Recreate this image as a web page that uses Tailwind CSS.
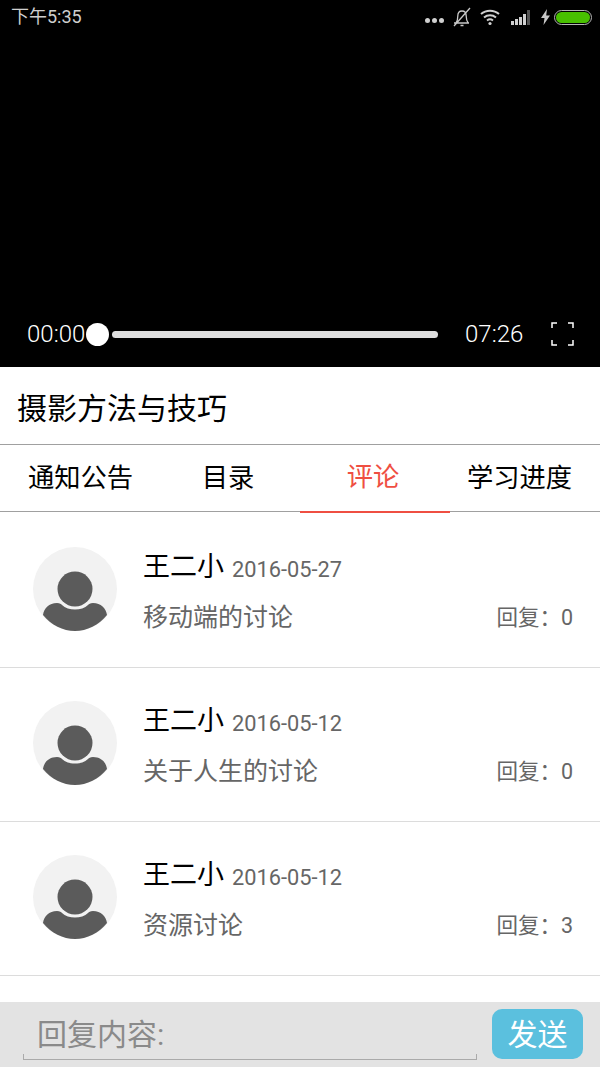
<!DOCTYPE html>
<html lang="zh-CN">
<head>
    <meta charset="UTF-8">
    <meta name="viewport" content="width=device-width, initial-scale=1.0">
    <title>摄影方法与技巧</title>
    <script src="https://cdn.jsdelivr.net/npm/@tailwindcss/browser@4"></script>
</head>
<body class="bg-white font-['Roboto','Noto_Sans_CJK_SC',sans-serif] overflow-hidden">
<div class="w-[600px] h-[1067px] flex flex-col">

    <!-- video + status bar -->
    <div class="h-[367px] bg-black flex flex-col justify-between">
        <div class="h-[34px] pl-[11px] pr-[8px] flex items-center justify-between text-[#cfcfcf]">
            <span class="text-[18px] leading-none">下午5:35</span>
            <div class="flex items-center">
                <div class="flex gap-[2px] mt-[7px] mr-[8px]">
                    <span class="w-[5px] h-[5px] rounded-full bg-[#d0d0d0]"></span>
                    <span class="w-[5px] h-[5px] rounded-full bg-[#d0d0d0]"></span>
                    <span class="w-[5px] h-[5px] rounded-full bg-[#d0d0d0]"></span>
                </div>
                <svg class="w-[20px] h-[20px] mr-[8px]" viewBox="0 0 20 20" fill="none" stroke="#c8c8c8" stroke-width="1.300"><path d="M2 16h15M4 16c1.500-2 1.800-4 1.800-7 0-3 1.800-5 4.200-5s4.200 2 4.200 5c0 3 .5 5 2 7M8.500 18.500h3M18 1 2 19"/></svg>
                <svg class="w-[20px] h-[18px] mr-[11px]" viewBox="0 0 20 18" fill="none" stroke="#d0d0d0" stroke-width="2"><path d="M1 6c5-4.500 13-4.500 18 0M4 9.500c3.500-3 8.500-3 12 0M7 12.500c1.800-1.400 4.200-1.400 6 0"/><circle cx="10" cy="15.500" r="1.600" fill="#d0d0d0" stroke="none"/></svg>
                <div class="flex items-end gap-[1px] h-[15px] mr-[11px]">
                    <span class="w-[3px] h-[4px] bg-[#d0d0d0]"></span>
                    <span class="w-[3px] h-[6px] bg-[#d0d0d0]"></span>
                    <span class="w-[3px] h-[8px] bg-[#d0d0d0]"></span>
                    <span class="w-[3px] h-[11px] bg-[#d0d0d0]"></span>
                    <span class="w-[3px] h-[15px] bg-[#555]"></span>
                </div>
                <svg class="w-[9px] h-[16px] mr-[4px]" viewBox="0 0 9 16" fill="#c8c8c8"><path d="M6 0 0 9h3.500L2.500 16 9 6.500H5.200z"/></svg>
                <div class="w-[38px] h-[15px] rounded-full border border-[#b5b5b5] p-[1px]">
                    <div class="w-full h-full rounded-full bg-[#48c000]"></div>
                </div>
            </div>
        </div>
        <div class="h-[44px] mb-[11px] pl-[27px] flex items-center text-white text-[24px] font-light">
            <span class="w-[59px] shrink-0">00:00</span>
            <span class="w-[23px] h-[23px] rounded-full bg-white shrink-0"></span>
            <span class="w-[326px] h-[7px] rounded-full bg-[#dedede] ml-[3px] shrink-0"></span>
            <span class="ml-[27px] w-[59px] shrink-0">07:26</span>
            <svg class="w-[23px] h-[24px] ml-[27px] shrink-0" viewBox="0 0 23 24" fill="none" stroke="#fff" stroke-width="1.500"><path d="M1 6V1h5M17 1h5v5M22 18v5h-5M6 23H1v-5"/></svg>
        </div>
    </div>

    <!-- title -->
    <div class="h-[78px] pl-[17px] pt-[5px] flex items-center border-b border-[#a0a0a0] text-[30px] text-black">摄影方法与技巧</div>

    <!-- tabs -->
    <div class="h-[67px] grid grid-cols-4 border-b border-[#a0a0a0] text-[26.300px] text-black">
        <div class="flex items-center justify-center pl-[11px]">通知公告</div>
        <div class="flex items-center justify-center pl-[6px]">目录</div>
        <div class="flex items-center justify-center text-[#ef4f42] h-[68px] border-b-2 border-[#ef4f42] pr-[4px]">评论</div>
        <div class="flex items-center justify-center ml-[-11px]">学习进度</div>
    </div>

    <!-- comments -->
    <div class="flex-1">
        <div class="h-[156px] pb-[1px] flex items-center border-b border-[#dcdcdc]">
            <svg class="w-[84px] h-[84px] ml-[33px] shrink-0" viewBox="0 0 84 84"><circle cx="42" cy="42" r="42" fill="#f2f2f2"/><circle cx="42" cy="42" r="17.500" fill="#5b5b5b"/><path d="M10 68C11 61 16 56 24 56C27 56 28 57 29 58C32 61 37 62.500 42 62.500S52 61 55 58C56 57 57 56 60 56C68 56 73 61 74 68C66 78 54 84 42 84S18 78 10 68Z" fill="#5b5b5b"/></svg>
            <div class="ml-[26px] mt-[5px] w-[430px]">
                <div class="flex items-center">
                    <span class="text-[27px] text-black">王二小</span>
                    <span class="ml-[8px] mt-[7px] text-[21.800px] text-[#666]">2016-05-27</span>
                </div>
                <div class="flex items-center justify-between mt-[12px]">
                    <span class="text-[25px] text-[#666]">移动端的讨论</span>
                    <span class="text-[21.500px] text-[#666]">回复：0</span>
                </div>
            </div>
        </div>
        <div class="h-[154px] pb-[3px] flex items-center border-b border-[#dcdcdc]">
            <svg class="w-[84px] h-[84px] ml-[33px] shrink-0" viewBox="0 0 84 84"><circle cx="42" cy="42" r="42" fill="#f2f2f2"/><circle cx="42" cy="42" r="17.500" fill="#5b5b5b"/><path d="M10 68C11 61 16 56 24 56C27 56 28 57 29 58C32 61 37 62.500 42 62.500S52 61 55 58C56 57 57 56 60 56C68 56 73 61 74 68C66 78 54 84 42 84S18 78 10 68Z" fill="#5b5b5b"/></svg>
            <div class="ml-[26px] mt-[5px] w-[430px]">
                <div class="flex items-center">
                    <span class="text-[27px] text-black">王二小</span>
                    <span class="ml-[8px] mt-[7px] text-[21.800px] text-[#666]">2016-05-12</span>
                </div>
                <div class="flex items-center justify-between mt-[12px]">
                    <span class="text-[25px] text-[#666]">关于人生的讨论</span>
                    <span class="text-[21.500px] text-[#666]">回复：0</span>
                </div>
            </div>
        </div>
        <div class="h-[154px] pb-[3px] flex items-center border-b border-[#dcdcdc]">
            <svg class="w-[84px] h-[84px] ml-[33px] shrink-0" viewBox="0 0 84 84"><circle cx="42" cy="42" r="42" fill="#f2f2f2"/><circle cx="42" cy="42" r="17.500" fill="#5b5b5b"/><path d="M10 68C11 61 16 56 24 56C27 56 28 57 29 58C32 61 37 62.500 42 62.500S52 61 55 58C56 57 57 56 60 56C68 56 73 61 74 68C66 78 54 84 42 84S18 78 10 68Z" fill="#5b5b5b"/></svg>
            <div class="ml-[26px] mt-[5px] w-[430px]">
                <div class="flex items-center">
                    <span class="text-[27px] text-black">王二小</span>
                    <span class="ml-[8px] mt-[7px] text-[21.800px] text-[#666]">2016-05-12</span>
                </div>
                <div class="flex items-center justify-between mt-[12px]">
                    <span class="text-[25px] text-[#666]">资源讨论</span>
                    <span class="text-[21.500px] text-[#666]">回复：3</span>
                </div>
            </div>
        </div>
    </div>

    <!-- reply bar -->
    <div class="h-[65px] bg-[#e3e3e3] flex items-start pl-[23px]">
        <div class="w-[454px] h-[58px] pl-[13px] pt-[8px] flex items-center text-[30px] text-[#8a8a8a] border-b border-x border-[#aaaaaa] [border-image:linear-gradient(to_bottom,transparent_90%,#aaaaaa_90%)_1]">回复内容:</div>
        <div class="ml-[15px] mt-[7px] w-[91px] h-[50px] rounded-[10px] bg-[#5bc0de] text-white text-[30px] flex items-center justify-center">发送</div>
    </div>
</div>
</body>
</html>
